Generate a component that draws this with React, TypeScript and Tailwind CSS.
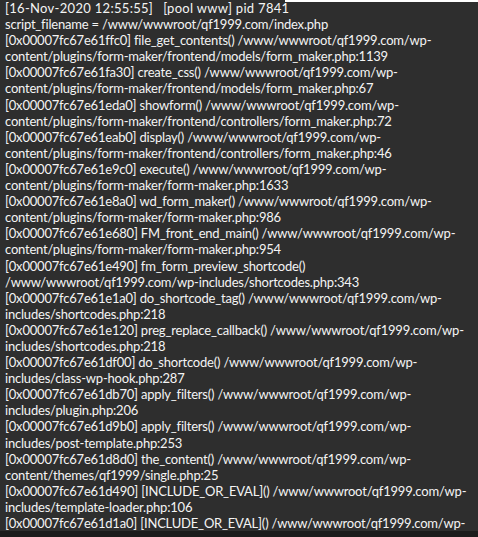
const lines = [
  'script_filename = /www/wwwroot/qf1999.com/index.php',
  '[0x00007fc67e61ffc0] file_get_contents() /www/wwwroot/qf1999.com/wp-',
  'content/plugins/form-maker/frontend/models/form_maker.php:1139',
  '[0x00007fc67e61fa30] create_css() /www/wwwroot/qf1999.com/wp-',
  'content/plugins/form-maker/frontend/models/form_maker.php:67',
  '[0x00007fc67e61eda0] showform() /www/wwwroot/qf1999.com/wp-',
  'content/plugins/form-maker/frontend/controllers/form_maker.php:72',
  '[0x00007fc67e61eab0] display() /www/wwwroot/qf1999.com/wp-',
  'content/plugins/form-maker/frontend/controllers/form_maker.php:46',
  '[0x00007fc67e61e9c0] execute() /www/wwwroot/qf1999.com/wp-',
  'content/plugins/form-maker/form-maker.php:1633',
  '[0x00007fc67e61e8a0] wd_form_maker() /www/wwwroot/qf1999.com/wp-',
  'content/plugins/form-maker/form-maker.php:986',
  '[0x00007fc67e61e680] FM_front_end_main() /www/wwwroot/qf1999.com/wp-',
  'content/plugins/form-maker/form-maker.php:954',
  '[0x00007fc67e61e490] fm_form_preview_shortcode()',
  '/www/wwwroot/qf1999.com/wp-includes/shortcodes.php:343',
  '[0x00007fc67e61e1a0] do_shortcode_tag() /www/wwwroot/qf1999.com/wp-',
  'includes/shortcodes.php:218',
  '[0x00007fc67e61e120] preg_replace_callback() /www/wwwroot/qf1999.com/wp-',
  'includes/shortcodes.php:218',
  '[0x00007fc67e61df00] do_shortcode() /www/wwwroot/qf1999.com/wp-',
  'includes/class-wp-hook.php:287',
  '[0x00007fc67e61db70] apply_filters() /www/wwwroot/qf1999.com/wp-',
  'includes/plugin.php:206',
  '[0x00007fc67e61d9b0] apply_filters() /www/wwwroot/qf1999.com/wp-',
  'includes/post-template.php:253',
  '[0x00007fc67e61d8d0] the_content() /www/wwwroot/qf1999.com/wp-',
  'content/themes/qf1999/single.php:25',
  '[0x00007fc67e61d490] [INCLUDE_OR_EVAL]() /www/wwwroot/qf1999.com/wp-',
  'includes/template-loader.php:106',
  '[0x00007fc67e61d1a0] [INCLUDE_OR_EVAL]() /www/wwwroot/qf1999.com/wp-',
  'blog-header.php:19',
];

export default function App() {
  return (
    <div className="relative w-[478px] h-[537px] overflow-hidden bg-[#1c1c1c]">
      <div className="h-[531px] overflow-hidden bg-[#2e2e2e] pl-[5px] text-[13px] leading-[16.1px] tracking-[-0.2px] text-[#f4f4f4] font-['Lato',sans-serif]">
        <div className="flex gap-[10px] whitespace-pre tracking-[0.3px]">
          <span>[16-Nov-2020 12:55:55]</span>
          <span>[pool www] pid 7841</span>
        </div>
        {lines.map((line, i) => (
          <div key={i} className="whitespace-pre">
            {line}
          </div>
        ))}
      </div>
      <div className="absolute top-0 left-[285px] right-0 h-[2px] bg-white" />
    </div>
  );
}
